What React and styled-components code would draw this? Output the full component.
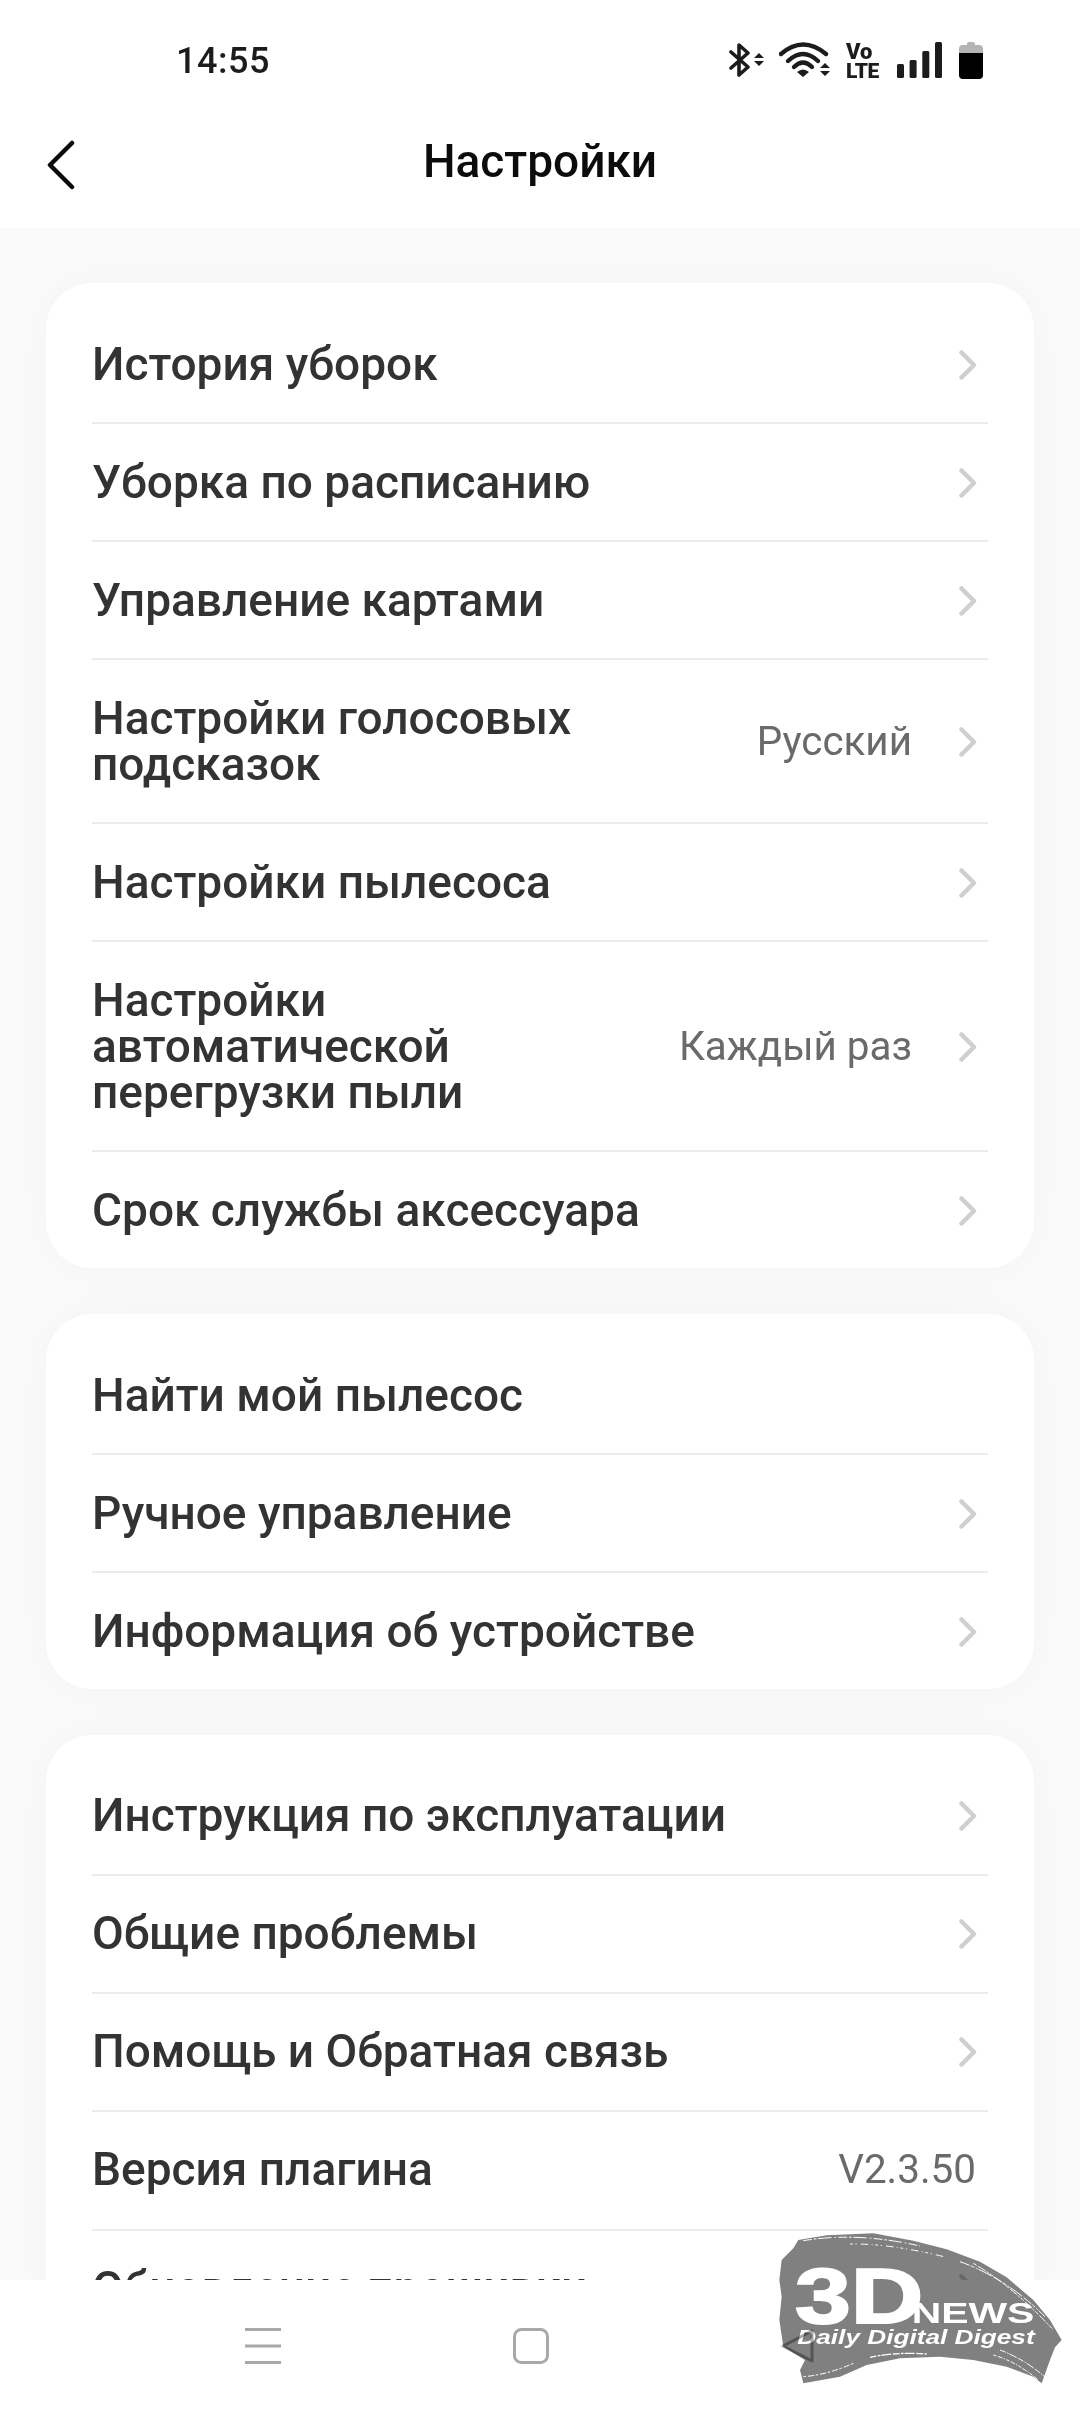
import React from "react";
import styled, { createGlobalStyle } from "styled-components";

const GlobalStyle = createGlobalStyle`
    html, body {
        margin: 0;
        padding: 0;
        background: #ffffff;
    }
    * {
        box-sizing: border-box;
    }
`

const Screen = styled.div`
    position: relative;
    width: 1080px;
    height: 2412px;
    display: flex;
    flex-direction: column;
    overflow: hidden;
    background: #fafafa;
    font-family: Roboto, "Noto Sans", sans-serif;
`

const Header = styled.header`
    flex: none;
    position: relative;
    z-index: 1;
    height: 228px;
    background: #ffffff;
`

const StatusBar = styled.div`
    height: 100px;
    padding: 20px 97px 0 176px;
    display: flex;
    align-items: center;
`

const Time = styled.div`
    flex: 1;
    padding-top: 2px;
    font-size: 36px;
    font-weight: 500;
    letter-spacing: 0.5px;
    color: #1c1c1c;
`

const StatusIcons = styled.div`
    display: flex;
    align-items: center;
`

const StatusSlot = styled.div`
    display: flex;
    margin-left: ${props => props.$gap}px;
`

const VoLte = styled.div`
    width: 32px;
    padding-top: 2px;
    display: flex;
    flex-direction: column;
    align-items: flex-start;
    gap: 5px;
    font-weight: 900;
    line-height: 15px;
    color: #1c1c1c;
`

const VoLine = styled.span`
    font-size: 22px;
`

const LteLine = styled.span`
    font-size: 21px;
    letter-spacing: -0.5px;
`

const TitleBar = styled.div`
    height: 128px;
    padding: 0 47px 6px;
    display: grid;
    grid-template-columns: 1fr auto 1fr;
    align-items: center;
`

const BackSlot = styled.div`
    display: flex;
    padding-top: 8px;
`

const Title = styled.h1`
    margin: 0;
    font-size: 46px;
    font-weight: 500;
    color: #0c0c0c;
`

const Content = styled.main`
    flex: 1;
    min-height: 0;
    overflow: hidden;
    padding: 55px 46px 0;
    display: flex;
    flex-direction: column;
    gap: 46px;
`

const Card = styled.section`
    flex: none;
    background: #ffffff;
    border-radius: 46px;
    padding: ${props => props.$lifted ? "22.5px" : "23px"} 46px 0;
    box-shadow: 0 0 46px rgba(0, 0, 0, 0.03);
`

const Row = styled.div`
    display: flex;
    align-items: center;
    padding: ${props => props.$lifted ? "34px 0 36px" : "35px 0"};
    border-bottom: 2px solid #ececec;

    &:last-child {
        border-bottom: none;
    }
`

const RowLabel = styled.div`
    flex: ${props => props.$narrow ? "0 1 500px" : "1"};
    min-width: 0;
    font-size: 46px;
    font-weight: 500;
    line-height: 46px;
    color: #333333;
`

const RowValue = styled.div`
    margin-left: auto;
    margin-right: ${props => props.$plain ? "12px" : "0"};
    padding-top: 1px;
    font-size: 40.4px;
    line-height: 46px;
    color: #6a6a6a;
`

const ChevronSlot = styled.div`
    flex: none;
    display: flex;
    padding-top: 2px;
    margin-left: ${props => props.$afterValue ? "47px" : "auto"};
    margin-right: 11px;
`

const BottomNav = styled.nav`
    flex: none;
    position: relative;
    height: 132px;
    padding: 0 266px 0 245px;
    display: flex;
    align-items: center;
    justify-content: space-between;
    background: #ffffff;
`

const Watermark = styled.svg`
    position: absolute;
    z-index: 2;
    left: 740px;
    top: 2220px;
    mix-blend-mode: multiply;
`

const Chevron = () => (
    <svg width="18" height="30" viewBox="0 0 18 30" fill="none">
        <path d="M2.5 2.5 L15 15 L2.5 27.5" stroke="#cfcfcf" strokeWidth="4.5" strokeLinecap="round" strokeLinejoin="round" />
    </svg>
)

const BackIcon = () => (
    <svg width="28" height="50" viewBox="0 0 28 50" fill="none">
        <path d="M25 3 L3 25 L25 47" stroke="#0c0c0c" strokeWidth="4.5" strokeLinecap="round" strokeLinejoin="round" />
    </svg>
)

const Bluetooth = () => (
    <svg width="35" height="36" viewBox="0 0 35 36" fill="#1c1c1c">
        <path d="M2 10 L19 25 L10 33 V3 L19 11 L2 26" fill="none" stroke="#1c1c1c" strokeWidth="3.6" strokeLinecap="round" strokeLinejoin="round" />
        <path d="M25 16 L30 11 L35 16 Z M25 19 L35 19 L30 24 Z" />
    </svg>
)

const Wifi = () => (
    <svg width="52" height="36" viewBox="0 0 52 36" fill="none">
        <path d="M2 12 Q24 -7 47 12" stroke="#1c1c1c" strokeWidth="4.4" strokeLinecap="round" />
        <path d="M9 19 Q24 5 39 19" stroke="#1c1c1c" strokeWidth="4.4" strokeLinecap="round" />
        <path d="M15 25 Q24 16 33 25" stroke="#1c1c1c" strokeWidth="4.4" strokeLinecap="round" />
        <path d="M18 30 Q24 25 30 30 L24 35 Z M41 26 L46 21 L51 26 Z M41 29 L51 29 L46 34 Z" fill="#1c1c1c" />
    </svg>
)

const Signal = () => (
    <svg width="45" height="36" viewBox="0 0 45 36" fill="#1c1c1c">
        <rect x="0" y="22" width="7" height="14" rx="1.5" />
        <rect x="12.6" y="18" width="7" height="18" rx="1.5" />
        <rect x="25.3" y="9" width="7" height="27" rx="1.5" />
        <rect x="38" y="0" width="7" height="36" rx="1.5" />
    </svg>
)

const Battery = () => (
    <svg width="24" height="37" viewBox="0 0 24 37">
        <path d="M8 1.5 Q8 0 10 0 H14 Q16 0 16 1.5 V3 H20 Q24 3 24 7 V11 H0 V7 Q0 3 4 3 H8 Z" fill="#b4b4b4" />
        <path d="M0 11 H24 V33 Q24 37 20 37 H4 Q0 37 0 33 Z" fill="#000000" />
    </svg>
)

const MenuIcon = () => (
    <svg width="36" height="36" viewBox="0 0 36 36" fill="#a8a8a8">
        <rect x="0" y="0" width="36" height="3" />
        <rect x="0" y="16.5" width="36" height="3" />
        <rect x="0" y="33" width="36" height="3" />
    </svg>
)

const HomeIcon = () => (
    <svg width="36" height="36" viewBox="0 0 36 36" fill="none">
        <rect x="1.5" y="1.5" width="33" height="33" rx="7" stroke="#a8a8a8" strokeWidth="3" />
    </svg>
)

const BackNavIcon = () => (
    <svg width="34" height="34" viewBox="0 0 34 34" fill="none">
        <path d="M32 2 V32 L3 17 Z" stroke="#a8a8a8" strokeWidth="3" strokeLinejoin="round" />
    </svg>
)

const Logo = () => (
    <Watermark width="340" height="170" viewBox="0 0 1020 510">
        <path
            d="M175 60 L260 46 L400 40 L520 62 L620 88 L720 125 L800 172 L880 240 L930 300 L965 360 L945 382 L930 420 L905 490 L880 470 L800 440 L700 420 L600 410 L480 415 L380 435 L300 470 L190 490 L180 450 L195 420 L130 380 L118 300 L125 230 L118 180 L125 120 L160 85 Z"
            fill="#808080"
        />
        <g fill="none" stroke="#ffffff" strokeWidth="3">
            <path d="M190 62 Q350 35 540 78" strokeDasharray="26 6 8 5 40 9 5 7" />
            <path d="M330 72 Q450 70 620 112" strokeDasharray="9 8 4 12 22 10 3 8" />
            <path d="M660 125 Q800 175 915 290" strokeDasharray="30 4 12 5 6 3 44 6" />
            <path d="M700 130 Q820 200 940 330" strokeDasharray="12 5 26 4 8 4" />
            <path d="M780 390 Q860 420 925 480" strokeDasharray="18 4 6 3 24 5" />
            <path d="M760 405 Q830 425 895 480" strokeDasharray="10 5 14 4 4 4" />
            <path d="M390 412 Q470 395 560 402" strokeWidth="4" strokeDasharray="20 4 8 3 30 5" />
            <path d="M420 432 Q510 415 620 425" strokeDasharray="14 5 9 4 28 4" />
            <path d="M190 470 Q260 465 340 430" strokeDasharray="8 6 18 5" />
        </g>
        <g fill="#ffffff" fontFamily="'Liberation Sans', sans-serif" fontWeight="700">
            <text x="165" y="310" fontSize="236" stroke="#ffffff" strokeWidth="6" textLength="385" lengthAdjust="spacingAndGlyphs">3D</text>
            <text x="515" y="310" fontSize="90" textLength="368" lengthAdjust="spacingAndGlyphs">NEWS</text>
            <text x="172" y="372" fontSize="60" fontStyle="italic" textLength="712" lengthAdjust="spacingAndGlyphs">Daily Digital Digest</text>
        </g>
    </Watermark>
)

const groups = [
    [
        { label: "История уборок" },
        { label: "Уборка по расписанию" },
        { label: "Управление картами" },
        { label: "Настройки голосовых подсказок", value: "Русский" },
        { label: "Настройки пылесоса" },
        { label: "Настройки автоматической перегрузки пыли", value: "Каждый раз" },
        { label: "Срок службы аксессуара" },
    ],
    [
        { label: "Найти мой пылесос", noArrow: true },
        { label: "Ручное управление" },
        { label: "Информация об устройстве" },
    ],
    [
        { label: "Инструкция по эксплуатации" },
        { label: "Общие проблемы" },
        { label: "Помощь и Обратная связь" },
        { label: "Версия плагина", value: "V2.3.50", noArrow: true },
        { label: "Обновление прошивки" },
    ],
]

const SettingsRow = ({ item, lifted }) => (
    <Row $lifted={lifted}>
        <RowLabel $narrow={!!item.value}>{item.label}</RowLabel>
        {item.value && <RowValue $plain={item.noArrow}>{item.value}</RowValue>}
        {!item.noArrow && <ChevronSlot $afterValue={!!item.value}><Chevron /></ChevronSlot>}
    </Row>
)

export default function App() {
    return (
        <Screen>
            <GlobalStyle />
            <Header>
                <StatusBar>
                    <Time>14:55</Time>
                    <StatusIcons>
                        <StatusSlot $gap={0}><Bluetooth /></StatusSlot>
                        <StatusSlot $gap={15}><Wifi /></StatusSlot>
                        <StatusSlot $gap={15}>
                            <VoLte><VoLine>Vo</VoLine><LteLine>LTE</LteLine></VoLte>
                        </StatusSlot>
                        <StatusSlot $gap={19}><Signal /></StatusSlot>
                        <StatusSlot $gap={17}><Battery /></StatusSlot>
                    </StatusIcons>
                </StatusBar>
                <TitleBar>
                    <BackSlot><BackIcon /></BackSlot>
                    <Title>Настройки</Title>
                </TitleBar>
            </Header>
            <Content>
                {groups.map((group, index) => (
                    <Card key={index} $lifted={index === 2}>
                        {group.map(item => <SettingsRow key={item.label} item={item} lifted={index === 2} />)}
                    </Card>
                ))}
            </Content>
            <BottomNav>
                <MenuIcon />
                <HomeIcon />
                <BackNavIcon />
            </BottomNav>
            <Logo />
        </Screen>
    )
}
